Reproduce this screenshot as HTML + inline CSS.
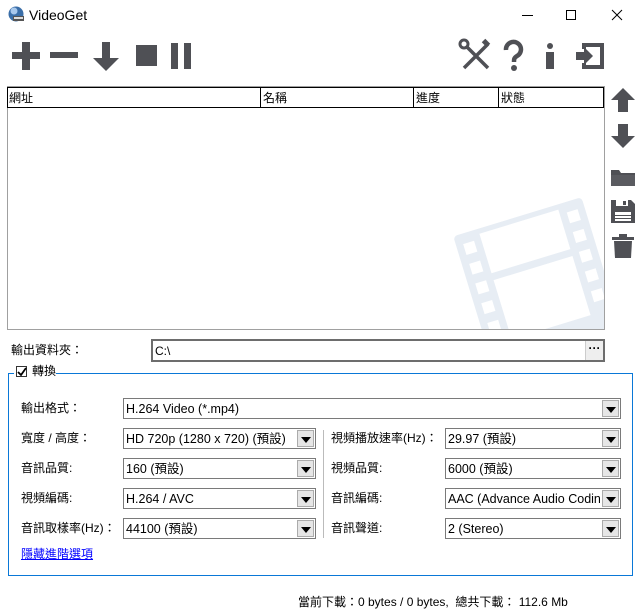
<!DOCTYPE html>
<html><head><meta charset="utf-8"><style>
*{margin:0;padding:0;box-sizing:border-box}
body{width:641px;height:613px;background:#fff;position:relative;overflow:hidden;font-family:"Liberation Sans","Noto Sans CJK TC",sans-serif;font-size:12px;color:#000}
.a{position:absolute}
.t{position:absolute;white-space:nowrap;line-height:14px}
.cb{position:absolute;height:21px;border:1px solid #7a7a7a;background:#fff}
.cb span{position:absolute;left:2px;top:3px;font-size:12.5px;line-height:14px;height:15px;white-space:nowrap;overflow:hidden;right:20px}
.cb i{position:absolute;right:1px;top:1px;width:17px;height:17px;background:#e6e6e6;border:1px solid #ababab}
.cb i:after{content:"";position:absolute;left:3px;top:6px;border-left:5px solid transparent;border-right:5px solid transparent;border-top:6px solid #000}
.hd{position:absolute;top:0;height:20px;border-left:1px solid #000;padding:3px 2px;font-size:12px;line-height:14px}
</style></head><body>
<svg class="a" style="left:7px;top:5px" width="18" height="18" viewBox="0 0 18 18"><circle cx="9" cy="9" r="7.5" fill="#3a6ea8"/><circle cx="7" cy="6" r="3.5" fill="#a8c8ec"/><rect x="6" y="11" width="11" height="5" fill="#555"/><rect x="7" y="12" width="9" height="2" fill="#ddd"/></svg>
<div class="t" style="left:29px;top:8px;font-size:14px">VideoGet</div>
<div class="a" style="left:522px;top:15px;width:11px;height:1px;background:#000"></div>
<div class="a" style="left:566px;top:10px;width:10px;height:10px;border:1px solid #000"></div>
<svg class="a" style="left:611px;top:9px" width="12" height="12"><path d="M1 1L11 11M11 1L1 11" stroke="#000" stroke-width="1"/></svg>
<svg class="a" style="left:0;top:36px" width="200" height="40" viewBox="0 0 200 40" fill="#4f5055">
<rect x="12" y="16" width="28" height="7"/><rect x="22" y="6" width="8" height="28"/>
<rect x="50" y="16" width="28" height="6"/>
<path d="M102 6h8v16h9l-13 13l-13-13h9z"/>
<rect x="136" y="9" width="21" height="21"/>
<rect x="171" y="7" width="7" height="26"/><rect x="184" y="7" width="7" height="26"/>
</svg>
<svg class="a" style="left:455px;top:36px" width="160" height="40" viewBox="0 0 160 40" fill="#4f5055" stroke="#4f5055">
<path d="M9 8L33 32M33 8L9 32" stroke-width="3.5" fill="none"/><circle cx="9" cy="8" r="4" fill="#fff" stroke-width="3"/><rect x="28" y="5" width="6" height="4" transform="rotate(45 31 7)"/>
<path d="M51 14a7.5 7.5 0 1 1 11 6c-3 2-3 3-3 6" stroke-width="4.5" fill="none"/><circle cx="59" cy="32" r="3" stroke="none"/>
<circle cx="95" cy="10" r="3" stroke="none"/><rect x="91" y="16" width="8" height="17" stroke="none"/>
<path d="M127 7h22v26h-22v-6h4v2h14v-18h-14v2h-4z" stroke="none"/><path d="M121 16h8v-5l9 9l-9 9v-5h-8z" stroke="none"/>
</svg>
<div class="a" style="left:7px;top:86px;width:598px;height:244px;border:1px solid #a0a0a0;overflow:hidden">
<svg class="a" style="left:437px;top:98px" width="165" height="160" viewBox="0 0 160 155"><g transform="rotate(-17 80 80)" fill="#e7edf4"><rect x="20" y="30" width="130" height="130" rx="4"/><g fill="#fff"><rect x="45" y="35" width="80" height="40"/><rect x="45" y="82" width="80" height="60"/><rect x="27" y="40" width="11" height="11"/><rect x="27" y="60" width="11" height="11"/><rect x="27" y="80" width="11" height="11"/><rect x="27" y="100" width="11" height="11"/><rect x="27" y="120" width="11" height="11"/><rect x="132" y="40" width="11" height="11"/><rect x="132" y="60" width="11" height="11"/><rect x="132" y="80" width="11" height="11"/><rect x="132" y="100" width="11" height="11"/><rect x="132" y="120" width="11" height="11"/></g></g></svg>
</div>
<div class="a" style="left:7px;top:87px;width:597px;height:21px;border:1px solid #000;background:#fff">
<div class="hd" style="left:-1px;border-left:none">網址</div>
<div class="hd" style="left:252px">名稱</div>
<div class="hd" style="left:405px">進度</div>
<div class="hd" style="left:490px">狀態</div>
</div>
<svg class="a" style="left:608px;top:86px" width="30" height="176" viewBox="0 0 30 176" fill="#4f5055">
<path d="M15 2l12 12h-7v12h-10v-12h-7z"/>
<path d="M10 38h10v12h7l-12 12l-12-12h7z"/>
<path d="M3 84h8l2 3h14v12h-24z"/><path d="M3 89h24v11h-24z" fill="#5a5b60"/>
<path d="M3 114h20l4 4v19h-24z"/><rect x="8" y="114" width="12" height="6" fill="#fff"/><rect x="15" y="115" width="3" height="4"/><rect x="7" y="126" width="16" height="9" fill="#fff"/><rect x="7" y="129" width="16" height="1"/><rect x="7" y="132" width="16" height="1"/>
<rect x="4" y="151" width="22" height="3"/><rect x="11" y="148" width="8" height="3"/><path d="M6 155h18l-1 17h-16z"/>
</svg>
<div class="t" style="left:11px;top:343px">輸出資料夾：</div>
<div class="a" style="left:151px;top:339px;width:454px;height:23px;border:2px solid #6d6d6d;background:#fff"><span class="t" style="left:2px;top:3px">C:\</span><div class="a" style="right:0;top:0;width:18px;height:19px;background:#eee;border-left:1px solid #ccc;font-weight:bold;text-align:center;line-height:14px">···</div></div>
<div class="a" style="left:8px;top:373px;width:625px;height:203px;border:1px solid #0a78d7"></div>
<div class="a" style="left:14px;top:365px;width:42px;height:16px;background:#fff"></div>
<div class="a" style="left:16px;top:366px;width:11px;height:11px;border:1px solid #333;background:#fff"></div>
<svg class="a" style="left:17px;top:367px" width="10" height="10"><path d="M1 5l3 3l5-7" stroke="#000" stroke-width="1.8" fill="none"/></svg>
<div class="t" style="left:32px;top:364px">轉換</div>
<div class="t" style="left:21px;top:401px">輸出格式：</div>
<div class="cb" style="left:123px;top:398px;width:498px"><span>H.264 Video (*.mp4)</span><i></i></div>
<div class="t" style="left:21px;top:431px">寬度 / 高度：</div>
<div class="cb" style="left:123px;top:428px;width:193px"><span>HD 720p (1280 x 720) (預設)</span><i></i></div>
<div class="t" style="left:21px;top:461px">音訊品質:</div>
<div class="cb" style="left:123px;top:458px;width:193px"><span>160 (預設)</span><i></i></div>
<div class="t" style="left:21px;top:491px">視頻編碼:</div>
<div class="cb" style="left:123px;top:488px;width:193px"><span>H.264 / AVC</span><i></i></div>
<div class="t" style="left:21px;top:521px">音訊取樣率(Hz)：</div>
<div class="cb" style="left:123px;top:518px;width:193px"><span>44100 (預設)</span><i></i></div>
<div class="a" style="left:323px;top:430px;width:1px;height:108px;background:#bbb"></div>
<div class="t" style="left:331px;top:431px">視頻播放速率(Hz)：</div>
<div class="cb" style="left:445px;top:428px;width:176px"><span>29.97 (預設)</span><i></i></div>
<div class="t" style="left:331px;top:461px">視頻品質:</div>
<div class="cb" style="left:445px;top:458px;width:176px"><span>6000 (預設)</span><i></i></div>
<div class="t" style="left:331px;top:491px">音訊編碼:</div>
<div class="cb" style="left:445px;top:488px;width:176px"><span>AAC (Advance Audio Coding)</span><i></i></div>
<div class="t" style="left:331px;top:521px">音訊聲道:</div>
<div class="cb" style="left:445px;top:518px;width:176px"><span>2 (Stereo)</span><i></i></div>
<div class="t" style="left:21px;top:547px;color:#00f;text-decoration:underline">隱藏進階選項</div>
<div class="t" style="left:298px;top:595px">當前下載：0 bytes / 0 bytes,&nbsp; 總共下載： 112.6 Mb</div>
</body></html>
